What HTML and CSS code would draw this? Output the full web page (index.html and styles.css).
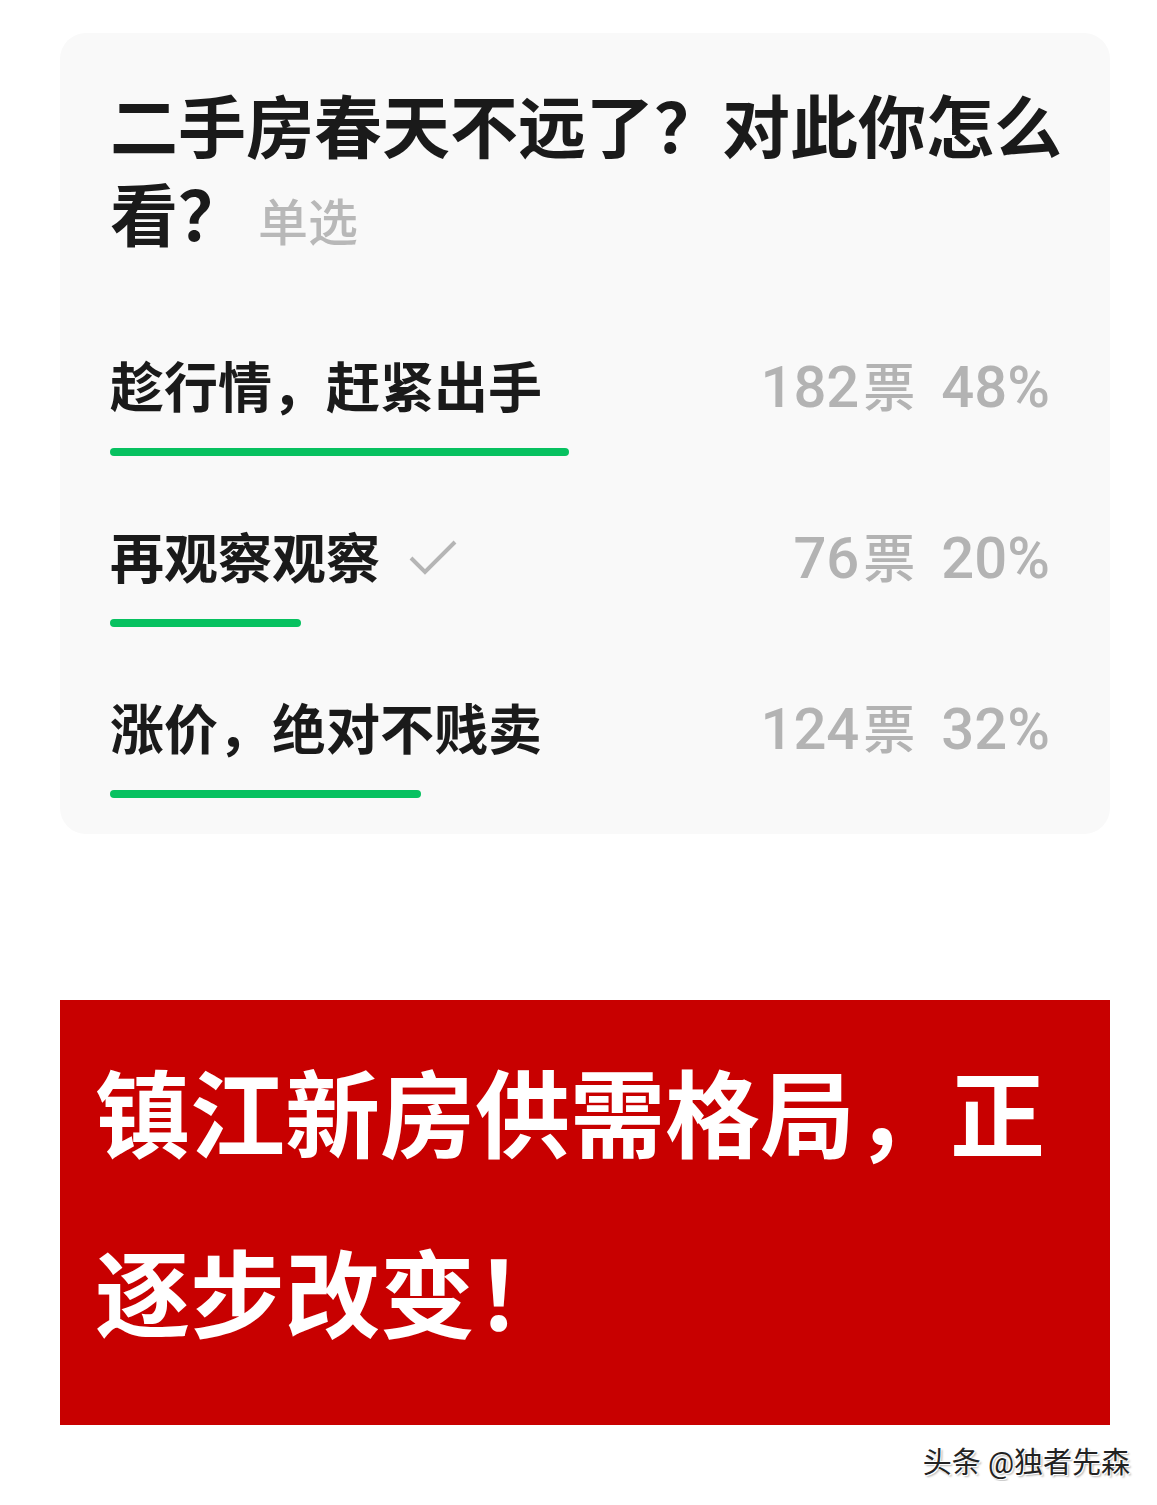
FILE: index.html
```html
<!DOCTYPE html>
<html lang="zh-CN">
<head>
  <meta charset="UTF-8">
  <meta name="viewport" content="width=device-width, initial-scale=1.0">
  <title>二手房春天不远了？</title>
  <link rel="stylesheet" href="styles.css">
</head>
<body>
  <div class="poll-card">
    <h1 class="poll-title">二手房春天不远了？对此你怎么看？<span class="poll-type">单选</span></h1>

    <div class="option">
      <div class="option-row">
        <span class="option-text">趁行情，赶紧出手</span>
        <span class="option-count">182<span class="unit">票</span><span class="percent">48%</span></span>
      </div>
      <div class="bar" style="width: 48%"></div>
    </div>

    <div class="option">
      <div class="option-row">
        <span class="option-text">再观察观察
          <svg class="check" width="50" height="36" viewBox="0 0 50 36">
            <path d="M3 19 L17 33 L47 3" fill="none" stroke="#b5b5b5" stroke-width="4"/>
          </svg>
        </span>
        <span class="option-count">76<span class="unit">票</span><span class="percent">20%</span></span>
      </div>
      <div class="bar" style="width: 20%"></div>
    </div>

    <div class="option">
      <div class="option-row">
        <span class="option-text">涨价，绝对不贱卖</span>
        <span class="option-count">124<span class="unit">票</span><span class="percent">32%</span></span>
      </div>
      <div class="bar" style="width: 32.5%"></div>
    </div>
  </div>

  <div class="headline">镇江新房供需格局，正逐步改变！</div>

  <div class="watermark">头条 @独者先森</div>
</body>
</html>
```

FILE: styles.css
```css
body {
  margin: 0;
  background-color: #fff;
  font-family: Roboto, "Noto Sans CJK SC", sans-serif;
  color: #1a1a1a;
}

.poll-card {
  width: 1050px;
  box-sizing: border-box;
  margin: 33px 0 0 60px;
  padding: 53px 44px 36px 50px;
  background-color: #f9f9f9;
  border-radius: 26px;
}

.poll-title {
  margin: 0;
  font-size: 68px;
  line-height: 88px;
  font-weight: 700;
  color: #1a1a1a;
}

.poll-type {
  margin-left: 12px;
  font-size: 50px;
  font-weight: 500;
  color: #b8b8b8;
}

.option {
  margin-top: 86px;
}

.option + .option {
  margin-top: 69px;
}

.option-row {
  display: flex;
  justify-content: space-between;
  align-items: center;
  height: 60px;
  padding-right: 16px;
}

.option-text {
  display: flex;
  align-items: center;
  font-size: 54px;
  font-weight: 700;
  color: #1a1a1a;
}

.check {
  margin-left: 28px;
  margin-top: 4px;
}

.option-count {
  font-size: 58px;
  font-weight: 500;
  color: #b3b3b3;
}

.unit {
  margin-left: 4px;
  font-size: 52px;
}

.percent {
  margin-left: 26px;
}

.bar {
  height: 8px;
  margin-top: 34px;
  background-color: #07c160;
  border-radius: 4px;
}

.headline {
  width: 1050px;
  box-sizing: border-box;
  margin: 166px 0 0 60px;
  padding: 29px 33px 36px 35px;
  background-color: #c80000;
  color: #fff;
  font-size: 95px;
  line-height: 180px;
  font-weight: 700;
}

.watermark {
  margin: 20px 27px 0 0;
  text-align: right;
  font-size: 29px;
  line-height: 36px;
  color: #222;
  text-shadow: 1px 1px 0 #fff, -1px -1px 0 #fff, 2px 2px 2px rgba(0, 0, 0, 0.3);
}
```
